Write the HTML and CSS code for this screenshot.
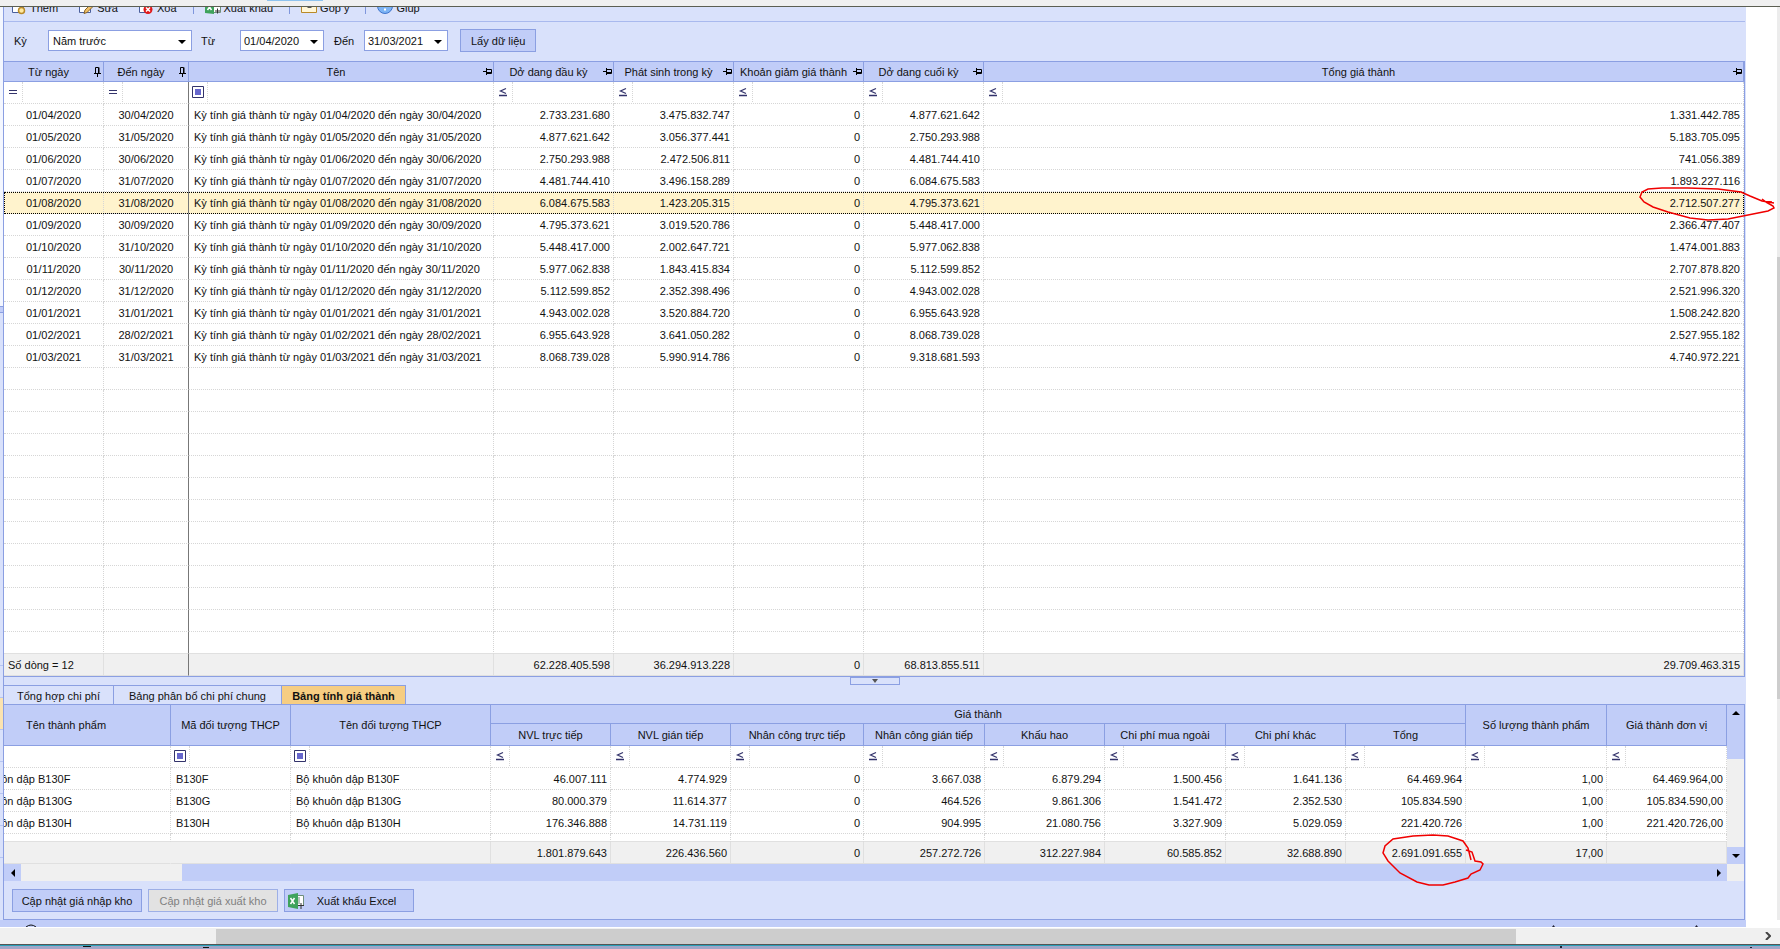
FILE: index.html
```
<!DOCTYPE html>
<html lang="vi">

<head>
    <meta charset="UTF-8">
    <meta name="viewport" content="width=device-width, initial-scale=1">
    <title>Giá thành</title>
    <link rel="stylesheet" href="styles.css">
</head>

<body>
    <div class="frame-top"><span class="frame-mark"></span></div>
    <div class="viewport">
        <div class="side">
            <div class="side-top"></div>
            <div class="side-split"></div>
            <ul>
                <li></li>
                <li class="on"></li>
                <li></li>
                <li></li>
                <li></li>
                <li></li>
                <li></li>
            </ul>
        </div>
        <div class="main">
            <div class="toolbar">
                <button type="button" class="tool">
                    <svg width="16" height="16" viewBox="0 0 16 16"><path d="M1.500 1.500h9l2 2v9h-11z" fill="#fff" stroke="#4a5f9c" /><circle cx="10.500" cy="10.500" r="3" fill="#ffe9a0" stroke="#b98a28" stroke-width="1.500" /></svg>
                    Thêm
                </button>
                <button type="button" class="tool">
                    <svg width="16" height="16" viewBox="0 0 16 16"><path d="M1.500 1.500h9l2 2v9h-11z" fill="#fff" stroke="#4a5f9c" /><path d="M6 13.500l1-3.500 6-6 2.500 2-6.500 6.500z" fill="#f0c068" stroke="#8a6424" /></svg>
                    Sửa
                </button>
                <button type="button" class="tool">
                    <svg width="16" height="16" viewBox="0 0 16 16"><path d="M1.500 1.500h9l2 2v9h-11z" fill="#fff" stroke="#4a5f9c" /><circle cx="10" cy="9.500" r="4.500" fill="#e01818" /><path d="M8 7.500l4 4M12 7.500l-4 4" stroke="#fff" stroke-width="1.500" /></svg>
                    Xóa
                </button>
                <span class="sep"></span>
                <button type="button" class="tool">
                    <svg width="16" height="16" viewBox="0 0 16 16"><path d="M8 1.500h7.500v11H8z" fill="#fff" stroke="#6f8f7c" /><path d="M0 2l9-2v14l-9-1z" fill="#3fa35c" /><path d="M2.500 4l4 6M6.500 4l-4 6" stroke="#fff" stroke-width="1.500" /><path d="M10 11h5M12.500 8.500v5" stroke="#333" /></svg>
                    Xuất khẩu
                </button>
                <span class="sep"></span>
                <button type="button" class="tool">
                    <svg width="16" height="16" viewBox="0 0 16 16"><path d="M.5 2.500h15v10H.5z" fill="#fff6d8" stroke="#b98a28" /><path d="M6.500 7.500h4" stroke="#555" /></svg>
                    Góp ý
                </button>
                <span class="sep"></span>
                <button type="button" class="tool">
                    <svg width="16" height="16" viewBox="0 0 16 16"><circle cx="8" cy="6" r="7.500" fill="#7db4f5" stroke="#3f74cc" /><path d="M8 8.500v2" stroke="#fff" stroke-width="2" /></svg>
                    Giúp
                </button>
            </div>

            <form class="filter">
                <label for="ky">Kỳ</label>
                <span class="combo combo-ky">
                    <select id="ky"><option>Năm trước</option></select>
                    <svg class="arrow" width="8" height="4" viewBox="0 0 8 4"><path d="M0 0h8L4 4z" /></svg>
                </span>
                <label for="tu" class="lb-tu">Từ</label>
                <span class="combo combo-date">
                    <input id="tu" type="text" value="01/04/2020">
                    <svg class="arrow" width="8" height="4" viewBox="0 0 8 4"><path d="M0 0h8L4 4z" /></svg>
                </span>
                <label for="den" class="lb-den">Đến</label>
                <span class="combo combo-date">
                    <input id="den" type="text" value="31/03/2021">
                    <svg class="arrow" width="8" height="4" viewBox="0 0 8 4"><path d="M0 0h8L4 4z" /></svg>
                </span>
                <button type="button" class="btn">Lấy dữ liệu</button>
            </form>

            <div class="box">
                <table class="grid periods">
                    <colgroup>
                        <col class="w100"><col class="w85"><col class="w305"><col class="w120"><col class="w120"><col class="w130"><col class="w120"><col>
                    </colgroup>
                    <thead id="periodHead"></thead>
                    <tbody id="periodBody"></tbody>
                    <tfoot>
                        <tr>
                            <td class="left">Số dòng = 12</td>
                            <td></td>
                            <td></td>
                            <td>62.228.405.598</td>
                            <td>36.294.913.228</td>
                            <td>0</td>
                            <td>68.813.855.511</td>
                            <td>29.709.463.315</td>
                        </tr>
                    </tfoot>
                </table>
            </div>

            <div class="splitter">
                <button type="button" aria-label="Thu gọn"><svg width="6" height="4" viewBox="0 0 6 4"><path d="M0 0h6L3 4z" fill="#555" /></svg></button>
            </div>

            <div class="tabs" role="tablist">
                <button type="button" role="tab" class="tab tab-1">Tổng hợp chi phí</button>
                <button type="button" role="tab" class="tab tab-2">Bảng phân bổ chi phí chung</button>
                <button type="button" role="tab" class="tab tab-3 active" aria-selected="true">Bảng tính giá thành</button>
            </div>

            <div class="box">
                <div class="scroller">
                    <div class="clip">
                        <table class="grid costs">
                            <colgroup>
                                <col class="w209"><col class="w120"><col class="w200"><col class="w120"><col class="w120"><col class="w133"><col class="w121"><col class="w120"><col class="w121"><col class="w120"><col class="w120"><col class="w141"><col>
                            </colgroup>
                            <thead>
                                <tr class="group">
                                    <th rowspan="2">Tên thành phẩm</th>
                                    <th rowspan="2">Mã đối tượng THCP</th>
                                    <th rowspan="2">Tên đối tượng THCP</th>
                                    <th colspan="8">Giá thành</th>
                                    <th rowspan="2">Số lượng thành phẩm</th>
                                    <th rowspan="2">Giá thành đơn vị</th>
                                </tr>
                                <tr class="sub">
                                    <th>NVL trực tiếp</th>
                                    <th>NVL gián tiếp</th>
                                    <th>Nhân công trực tiếp</th>
                                    <th>Nhân công gián tiếp</th>
                                    <th>Khấu hao</th>
                                    <th>Chi phí mua ngoài</th>
                                    <th>Chi phí khác</th>
                                    <th>Tổng</th>
                                </tr>
                            </thead>
                            <tbody id="costBody"></tbody>
                            <tfoot>
                                <tr>
                                    <td class="plain"></td>
                                    <td class="plain"></td>
                                    <td></td>
                                    <td>1.801.879.643</td>
                                    <td>226.436.560</td>
                                    <td>0</td>
                                    <td>257.272.726</td>
                                    <td>312.227.984</td>
                                    <td>60.585.852</td>
                                    <td>32.688.890</td>
                                    <td>2.691.091.655</td>
                                    <td>17,00</td>
                                    <td></td>
                                </tr>
                            </tfoot>
                        </table>
                    </div>
                    <div class="vbar">
                        <div class="vbar-up"><svg width="8" height="4" viewBox="0 0 8 4"><path d="M0 4h8L4 0z" /></svg></div>
                        <div class="vbar-down"><svg width="8" height="4" viewBox="0 0 8 4"><path d="M0 0h8L4 4z" /></svg></div>
                    </div>
                </div>
                <div class="hbar">
                    <div class="hbar-left"><svg width="4" height="8" viewBox="0 0 4 8"><path d="M4 0v8L0 4z" /></svg></div>
                    <div class="hbar-track"></div>
                    <div class="hbar-thumb"><svg width="4" height="8" viewBox="0 0 4 8"><path d="M0 0v8l4-4z" /></svg></div>
                    <div class="hbar-corner"></div>
                </div>
                <div class="actions">
                    <button type="button" class="btn">Cập nhật giá nhập kho</button>
                    <button type="button" class="btn" disabled>Cập nhật giá xuất kho</button>
                    <button type="button" class="btn btn-excel">
                        <svg width="16" height="16" viewBox="0 0 16 16"><path d="M8 2.500h7.500v10H8z" fill="#fff" stroke="#6f8f7c" /><path d="M11 4v7" stroke="#6f8f7c" /><path d="M0 2l10-2v16l-10-2z" fill="#3fa35c" /><path d="M2.500 5l4 6M6.500 5l-4 6" stroke="#fff" stroke-width="1.500" /><path d="M10 12.500h6M13 10v6" stroke="#333" /></svg>
                        <span>Xuất khẩu Excel</span>
                    </button>
                </div>
            </div>
            <svg class="mark mark-period" width="138" height="36" viewBox="0 0 138 36"><path d="M136 18L124 16 112 11 103 7 80 4 50 3 24 3 10 4 4 7 2 12 6 17 15 22 30 27 52 33 70 35 90 34 115 29 130 26 136 23 135 21 128 17 124 14M124 16L134 17" /></svg>
            <svg class="mark mark-total" width="104" height="54" viewBox="0 0 104 54"><path d="M90 27L87 15 82 8 67 3 52 2 32 3 12 6 4 13 2 20 7 28 19 40 36 49 48 52 62 52 74 49 87 45 90 41 99 37 102 31 100 29 94 28 91 19 85 17" /></svg>
        </div>
        <div class="gutter"></div>
        <div class="pagebar"><div class="pagebar-thumb"></div></div>
    </div>
    <div class="band">
        <svg width="12" height="3" viewBox="0 0 12 3"><path d="M1 3Q6-1 11 3" fill="none" stroke="#111" /></svg>
        <svg width="146" height="2" viewBox="0 0 146 2"><path d="M0 2l1.500-2L3 2zM143 2l1.500-2L146 2z" fill="#223" /></svg>
    </div>
    <div class="frame-scroll">
        <div class="frame-thumb"></div>
        <svg width="6" height="8" viewBox="0 0 6 8"><path d="M1 0l4 4-4 4" fill="none" stroke="#444" stroke-width="2" /></svg>
    </div>
    <div class="frame-bottom">
        <svg width="128" height="2" viewBox="0 0 128 2"><path d="M0 0h8v1H0zM120 1h6v1h-6z" fill="#111" /></svg>
        <svg width="194" height="2" viewBox="0 0 194 2"><path d="M0 0h2v2H0zM190 1h2v1h-2z" fill="#223" /></svg>
    </div>
    <script src="script.js"></script>
</body>

</html>
```
FILE: styles.css
```
* {
    margin: 0;
    padding: 0;
    box-sizing: border-box;
}

body {
    display: flex;
    flex-direction: column;
    min-height: 100vh;
    overflow: hidden;
    background-color: #fff;
    color: #111;
    font: 11px/14px "Liberation Sans", Arial, sans-serif;
}

button,
input,
select {
    font: inherit;
    color: inherit;
    border: 0;
    background: none;
    border-radius: 0;
    outline: 0;
}

ul {
    list-style: none;
}

svg {
    display: block;
    flex: none;
}

.frame-top {
    height: 7px;
    background-color: #f0f0f0;
    border-bottom: 1px solid #5c5f52;
}

.frame-mark {
    display: block;
    width: 56px;
    height: 1px;
    margin-left: 267px;
    background-color: #8fc3ee;
}

.viewport {
    display: flex;
    flex: 1;
}

/* neighbouring panel */
.side {
    width: 3px;
    background-color: #d9e1fb;
}

.side-top {
    height: 299px;
    background-color: #f4f7ff;
}

.side-split {
    height: 7px;
    border: solid #8b9fe2;
    border-width: 1px 0;
    background-color: #c1cdf8;
}

.side ul {
    padding-top: 352px;
}

.side li {
    height: 32px;
    border-top: 1px solid #b5c4f2;
}

.side .on {
    background-color: #fbe3b0;
}

.main {
    position: relative;
    flex: 1;
    min-width: 0;
    padding-right: 1px;
    border-left: 1px solid #8b9fe2;
    background-color: #d9e1fb;
}

.gutter {
    width: 31px;
}

.pagebar {
    width: 3px;
    padding-top: 250px;
    background-color: #ececec;
}

.pagebar-thumb {
    height: 442px;
    background-color: #cdcdcd;
}

.toolbar {
    display: flex;
    align-items: flex-end;
    height: 15px;
    padding: 0 7px 5px;
    overflow: hidden;
    border-bottom: 1px solid #a9b9ee;
}

.tool {
    display: flex;
    align-items: center;
    gap: 3px;
    height: 16px;
    margin-right: 20px;
    line-height: 16px;
    white-space: nowrap;
}

.sep {
    width: 1px;
    height: 14px;
    margin: 0 11px 2px -4px;
    background-color: #7f96dc;
}

.filter {
    display: flex;
    align-items: center;
    height: 39px;
    padding: 0 10px 2px;
}

.filter label {
    width: 34px;
}

.filter .lb-tu {
    width: 48px;
    padding-left: 9px;
}

.filter .lb-den {
    width: 40px;
    padding-left: 10px;
}

.combo {
    position: relative;
    height: 21px;
    border: 1px solid #8b9fe2;
    background-color: #fff;
}

.combo-ky {
    width: 144px;
}

.combo-date {
    width: 84px;
}

.combo select,
.combo input {
    display: block;
    width: 100%;
    height: 19px;
    padding: 0 4px;
    appearance: none;
}

.combo input {
    padding: 0 3px;
}

.combo .arrow {
    position: absolute;
    top: 9px;
    right: 5px;
    pointer-events: none;
}

.btn {
    height: 23px;
    padding: 0 10px;
    border: 1px solid #8b9fe2;
    background-color: #c1cdf8;
    white-space: nowrap;
}

.filter .btn {
    margin-left: 12px;
}

.btn:disabled {
    border-color: #9dafe6;
    background-color: #e2e2e2;
    color: #808080;
}

.box {
    border: solid #8b9fe2;
    border-width: 1px 1px 1px 0;
}

/* grids */
.grid {
    width: 100%;
    table-layout: fixed;
    border-collapse: separate;
    border-spacing: 0;
    background-color: #fff;
}

.w85 { width: 85px; }
.w100 { width: 100px; }
.w120 { width: 120px; }
.w121 { width: 121px; }
.w130 { width: 130px; }
.w133 { width: 133px; }
.w141 { width: 141px; }
.w200 { width: 200px; }
.w209 { width: 209px; }
.w305 { width: 305px; }

.grid th {
    height: 20px;
    border: solid #8b9fe2;
    border-width: 0 1px 1px 0;
    background-color: #c1cdf8;
    font-weight: normal;
    text-align: center;
}

.grid td {
    height: 22px;
    padding: 0 3px;
    border: dotted #d6d6d6;
    border-width: 0 1px 1px 0;
    text-align: right;
    white-space: nowrap;
    overflow: hidden;
}

.grid td.center {
    text-align: center;
}

.grid td.left {
    padding-left: 5px;
    text-align: left;
}

.head {
    display: flex;
    align-items: center;
}

.head span {
    flex: 1;
}

.head svg {
    margin-right: 1px;
}

.grid.periods td:nth-child(2) {
    border-right: 1px solid #777;
}

.periods .selected td {
    background-color: #fff3cd;
}

.periods .selected {
    outline: 1px dotted #000;
    outline-offset: -1px;
}

.grid tbody tr:last-child td {
    border-bottom: 1px solid #e0e0e0;
}

.grid tfoot td {
    border-style: solid;
    border-color: #e0e0e0;
    background-color: #f0f0f0;
}

.grid tfoot .left {
    padding-left: 4px;
}

.grid tfoot .plain {
    border-right-color: #f0f0f0;
}

.grid td.query {
    padding: 0;
}

.query div {
    display: flex;
    height: 21px;
}

.query button {
    display: flex;
    flex: none;
    align-items: center;
    justify-content: center;
    width: 19px;
    height: 20px;
    border-right: 1px dotted #d6d6d6;
}

.query input {
    width: 100%;
    min-width: 0;
}

.clip {
    flex: 1;
    min-width: 0;
    overflow: hidden;
}

/* scrolled 42px to the right */
.grid.costs {
    width: calc(100% + 42px);
    margin-left: -42px;
}

.costs .group th {
    height: 19px;
}

.costs .sub th {
    height: 22px;
}

.costs .rest td {
    height: 8px;
}

.splitter {
    display: flex;
    justify-content: center;
    height: 8px;
}

.splitter button {
    display: flex;
    align-items: center;
    justify-content: center;
    width: 50px;
    height: 8px;
    border: 1px solid #8b9fe2;
}

.tabs {
    display: flex;
    height: 19px;
}

.tab {
    border: solid #8b9fe2;
    border-width: 1px 1px 0 0;
    padding-top: 2px;
    white-space: nowrap;
}

.tab-1 {
    width: 110px;
}

.tab-2 {
    width: 168px;
}

.tab-3 {
    width: 124px;
}

.tab.active {
    background-color: #f6cd82;
    font-weight: bold;
}

.scroller {
    display: flex;
}

.vbar {
    display: flex;
    flex-direction: column;
    justify-content: space-between;
    width: 17px;
    background-color: #f0f0f0;
}

.vbar-up {
    display: flex;
    justify-content: center;
    height: 54px;
    padding-top: 6px;
    background-color: #c1cdf8;
}

.vbar-down {
    display: flex;
    align-items: center;
    justify-content: center;
    height: 17px;
    background-color: #c1cdf8;
}

.hbar {
    display: flex;
    height: 17px;
}

.hbar-left {
    display: flex;
    align-items: center;
    justify-content: center;
    width: 17px;
    background-color: #c1cdf8;
}

.hbar-track {
    width: 161px;
    background-color: #f0f0f0;
}

.hbar-thumb {
    display: flex;
    flex: 1;
    align-items: center;
    justify-content: flex-end;
    padding-right: 6px;
    background-color: #c1cdf8;
}

.hbar-corner {
    width: 17px;
    background-color: #f0f0f0;
}

.actions {
    display: flex;
    gap: 6px;
    padding: 8px 8px 7px;
}

.actions .btn {
    width: 130px;
    padding: 0;
}

.actions .btn-excel {
    display: flex;
    align-items: center;
    padding-left: 3px;
}

.btn-excel span {
    flex: 1;
    padding-right: 4px;
}

/* pen marks */
.mark {
    position: absolute;
    fill: none;
    stroke: #f00000;
    stroke-width: 1.5;
    pointer-events: none;
}

.mark-period {
    top: 178px;
    right: -30px;
}

.mark-total {
    top: 826px;
    right: 261px;
}

.band {
    display: flex;
    align-items: flex-end;
    justify-content: space-between;
    height: 8px;
    margin-right: 34px;
    padding: 0 48px 0 25px;
    border-bottom: 1px solid #fff;
    background-color: #c1cdf8;
}

.frame-scroll {
    display: flex;
    align-items: center;
    height: 16px;
    padding: 0 9px 0 216px;
    background-color: #f0f0f0;
}

.frame-thumb {
    flex: 1;
    height: 15px;
    margin-right: 249px;
    background-color: #cdcdcd;
}

.frame-bottom {
    display: flex;
    justify-content: space-between;
    height: 5px;
    padding: 1px 26px 0 83px;
    border-top: 1px solid #555;
    background-color: #a0a6c8;
    box-shadow: inset 0 1px #2aa0b8;
}
```
FILE: script.js
```
const pinned = '<svg width="9" height="10" viewBox="0 0 9 10"><path d="M2.500 6V.5h3V6M1 6.500h7M4.500 7v3" fill="none" stroke="#000"/><path d="M5.500 .5h1V6h-1z"/></svg>';
const unpinned = '<svg width="9" height="8" viewBox="0 0 9 8"><path d="M3 1.500h5.500v4H3M3 4.500h5.500M3.500 0v7M0 3.500h3" fill="none" stroke="#000"/></svg>';
const ops = {
    eq: '<svg width="8" height="4" viewBox="0 0 8 4"><path d="M0 .5h8M0 3.500h8" stroke="#33336b"/></svg>',
    le: '<svg width="8" height="10" viewBox="0 0 8 10"><path d="M7 1.500L1.500 4 7 6.500M0 8.500h8" fill="none" stroke="#33336b" stroke-width="1.300"/></svg>',
    box: '<svg width="12" height="12" viewBox="0 0 12 12"><path d="M.5 .5h11v11H.5z" fill="#fff" stroke="#33336b"/><path d="M3 3h6v6H3z" fill="#6666cc"/></svg>'
};

const periodCols = ['Từ ngày', 'Đến ngày', 'Tên', 'Dở dang đầu kỳ', 'Phát sinh trong kỳ', 'Khoản giảm giá thành', 'Dở dang cuối kỳ', 'Tổng giá thành'];
const periodOps = ['eq', 'eq', 'box', 'le', 'le', 'le', 'le', 'le'];
const periods = [
    ['01/04/2020', '30/04/2020', '2.733.231.680', '3.475.832.747', '4.877.621.642', '1.331.442.785'],
    ['01/05/2020', '31/05/2020', '4.877.621.642', '3.056.377.441', '2.750.293.988', '5.183.705.095'],
    ['01/06/2020', '30/06/2020', '2.750.293.988', '2.472.506.811', '4.481.744.410', '741.056.389'],
    ['01/07/2020', '31/07/2020', '4.481.744.410', '3.496.158.289', '6.084.675.583', '1.893.227.116'],
    ['01/08/2020', '31/08/2020', '6.084.675.583', '1.423.205.315', '4.795.373.621', '2.712.507.277'],
    ['01/09/2020', '30/09/2020', '4.795.373.621', '3.019.520.786', '5.448.417.000', '2.366.477.407'],
    ['01/10/2020', '31/10/2020', '5.448.417.000', '2.002.647.721', '5.977.062.838', '1.474.001.883'],
    ['01/11/2020', '30/11/2020', '5.977.062.838', '1.843.415.834', '5.112.599.852', '2.707.878.820'],
    ['01/12/2020', '31/12/2020', '5.112.599.852', '2.352.398.496', '4.943.002.028', '2.521.996.320'],
    ['01/01/2021', '31/01/2021', '4.943.002.028', '3.520.884.720', '6.955.643.928', '1.508.242.820'],
    ['01/02/2021', '28/02/2021', '6.955.643.928', '3.641.050.282', '8.068.739.028', '2.527.955.182'],
    ['01/03/2021', '31/03/2021', '8.068.739.028', '5.990.914.786', '9.318.681.593', '4.740.972.221']
];
const costOps = ['box', 'box', 'box', 'le', 'le', 'le', 'le', 'le', 'le', 'le', 'le', 'le', 'le'];
const costs = [
    ['B130F', '46.007.111', '4.774.929', '0', '3.667.038', '6.879.294', '1.500.456', '1.641.136', '64.469.964', '1,00', '64.469.964,00'],
    ['B130G', '80.000.379', '11.614.377', '0', '464.526', '9.861.306', '1.541.472', '2.352.530', '105.834.590', '1,00', '105.834.590,00'],
    ['B130H', '176.346.888', '14.731.119', '0', '904.995', '21.080.756', '3.327.909', '5.029.059', '221.420.726', '1,00', '221.420.726,00']
];

function queryRow(list) {
    return '<tr>' + list.map(op => `<td class="query"><div><button type="button" aria-label="Điều kiện">${ops[op]}</button><input type="text" aria-label="Lọc"></div></td>`).join('') + '</tr>';
}

function emptyRow(count, cls) {
    return `<tr class="${cls}">` + '<td></td>'.repeat(count) + '</tr>';
}

document.getElementById('periodHead').innerHTML = '<tr>' + periodCols.map((name, i) =>
    `<th><div class="head"><span>${name}</span>${i < 2 ? pinned : unpinned}</div></th>`).join('') + '</tr>';

let html = queryRow(periodOps);
periods.forEach((p, i) => {
    html += `<tr class="${i === 4 ? 'selected' : ''}">
        <td class="center">${p[0]}</td>
        <td class="center">${p[1]}</td>
        <td class="left">Kỳ tính giá thành từ ngày ${p[0]} đến ngày ${p[1]}</td>
        <td>${p[2]}</td>
        <td>${p[3]}</td>
        <td>0</td>
        <td>${p[4]}</td>
        <td>${p[5]}</td>
    </tr>`;
});
for (let i = 0; i < 13; i++) {
    html += emptyRow(8, '');
}
document.getElementById('periodBody').innerHTML = html;

html = queryRow(costOps);
costs.forEach(c => {
    html += `<tr>
        <td class="left">Bộ khuôn dập ${c[0]}</td>
        <td class="left">${c[0]}</td>
        <td class="left">Bộ khuôn dập ${c[0]}</td>
        ${c.slice(1).map(v => `<td>${v}</td>`).join('')}
    </tr>`;
});
html += emptyRow(13, 'rest');
document.getElementById('costBody').innerHTML = html;
```
